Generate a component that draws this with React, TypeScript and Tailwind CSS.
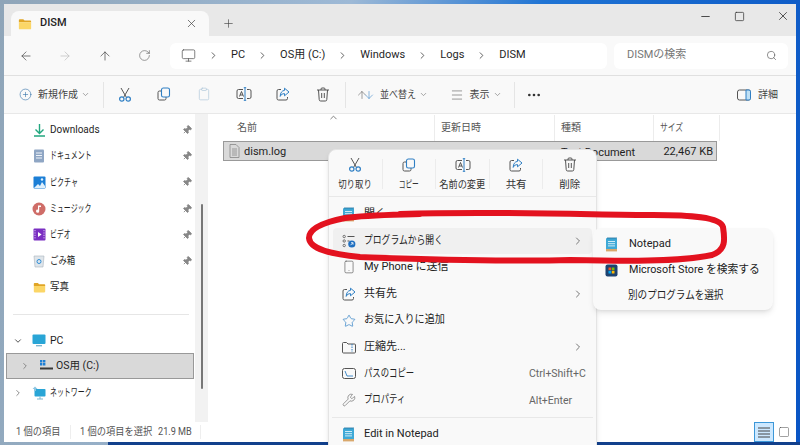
import { ArrowDown, ArrowLeft, ArrowRight, ArrowUp, ChevronDown, ChevronRight, ChevronUp, CirclePlus, Clipboard, Ellipsis, Menu, Minus, Monitor, Pin, Plus, RotateCw, Search, Square, Star, Smartphone, Wrench, X } from "lucide-react";
import type { ReactNode } from "react";

function FolderIcon({ size = 14 }: { size?: number }) {
  return (
    <svg width={size} height={size} viewBox="0 0 16 16">
      <path d="M1 3.5A1 1 0 0 1 2 2.5h4l1.5 1.5H14a1 1 0 0 1 1 1V6H1z" fill="#e0a526" />
      <path d="M1 6h14v7a1 1 0 0 1-1 1H2a1 1 0 0 1-1-1z" fill="#fbd667" />
    </svg>
  );
}

function ScissorsIcon() {
  return (
    <svg width="14" height="15" viewBox="0 0 14 15" fill="none">
      <path d="M3 1l5.2 9M11 1L5.8 10" stroke="#555" strokeWidth="1" />
      <circle cx="3.8" cy="12" r="2.2" stroke="#2f7fc4" strokeWidth="1.2" />
      <circle cx="10.2" cy="12" r="2.2" stroke="#2f7fc4" strokeWidth="1.2" />
    </svg>
  );
}

function CopyIcon() {
  return (
    <svg width="14" height="14" viewBox="0 0 14 14" fill="none">
      <path d="M4 4H2.5A1.5 1.5 0 0 0 1 5.5v6A1.5 1.5 0 0 0 2.5 13h5A1.5 1.5 0 0 0 9 11.5V10" stroke="#555" />
      <rect x="4.5" y="1" width="8" height="9" rx="1.8" stroke="#2f7fc4" strokeWidth="1.1" />
    </svg>
  );
}

function RenameIcon() {
  return (
    <svg width="16" height="14" viewBox="0 0 16 14" fill="none">
      <path d="M7 2.5H2.5A1.5 1.5 0 0 0 1 4v6a1.5 1.5 0 0 0 1.5 1.5H7M11 2.5h2.5A1.5 1.5 0 0 1 15 4v6a1.5 1.5 0 0 1-1.5 1.5H11" stroke="#555" />
      <path d="M3.5 9.5L5.5 4.5 7.5 9.5M4.2 8h2.6" stroke="#444" strokeWidth="0.9" />
      <path d="M9 .7v12.6M7.8.7h2.4M7.8 13.3h2.4" stroke="#2f7fc4" strokeWidth="1" />
    </svg>
  );
}

function ShareIcon() {
  return (
    <svg width="14" height="14" viewBox="0 0 14 14" fill="none">
      <path d="M5 2.5H2.5A1.5 1.5 0 0 0 1 4v7.5A1.5 1.5 0 0 0 2.5 13h7.5a1.5 1.5 0 0 0 1.5-1.5V10" stroke="#555" />
      <path d="M8.5 1.2L13 5 8.5 8.8V6.6C6.5 6.6 5 7.5 4.2 9.4 4.2 6 6 3.500 8.5 3.4z" stroke="#2f7fc4" strokeLinejoin="round" />
    </svg>
  );
}

function TrashIcon() {
  return (
    <svg width="14" height="15" viewBox="0 0 14 15" fill="none" stroke="#555">
      <path d="M1 3h12M5 3V2a1 1 0 0 1 1-1h2a1 1 0 0 1 1 1v1M2.5 3l.7 9.5A1.5 1.5 0 0 0 4.7 14h4.6a1.5 1.5 0 0 0 1.5-1.5L11.5 3" />
      <path d="M5.7 6v5M8.3 6v5" />
    </svg>
  );
}

function NotepadIcon() {
  return (
    <svg width="13" height="15" viewBox="0 0 13 15">
      <rect x="1" y="1" width="11" height="13" rx="1" fill="#3fa9d6" />
      <rect x="1" y="12" width="11" height="2.4" fill="#d9a86c" />
      <path d="M3 4.5h7M3 6.7h7M3 8.9h7" stroke="#dff3fb" strokeWidth="0.9" />
      <path d="M3 0v2.2M5 0v2.2M7 0v2.2M9 0v2.2M11 0v2.2" stroke="#1e6f9c" strokeWidth="0.8" />
    </svg>
  );
}

function StoreIcon() {
  return (
    <svg width="13" height="13" viewBox="0 0 13 13">
      <rect x="0.5" y="0.5" width="12" height="12" rx="2" fill="#1d4270" />
      <rect x="3.5" y="3.5" width="2.7" height="2.7" fill="#f25022" />
      <rect x="6.8" y="3.5" width="2.7" height="2.7" fill="#7fba00" />
      <rect x="3.5" y="6.8" width="2.7" height="2.7" fill="#00a4ef" />
      <rect x="6.8" y="6.8" width="2.7" height="2.7" fill="#ffb900" />
    </svg>
  );
}

function OpenWithIcon() {
  return (
    <svg width="14" height="14" viewBox="0 0 14 14" fill="none">
      <circle cx="2.2" cy="2.5" r="1.2" stroke="#555" strokeWidth="0.8" />
      <circle cx="2.2" cy="7" r="1.2" stroke="#555" strokeWidth="0.8" />
      <circle cx="2.2" cy="11.5" r="1.2" stroke="#555" strokeWidth="0.8" />
      <path d="M5.5 2.5h7M5.5 7h2" stroke="#555" />
      <circle cx="9.8" cy="10" r="3.6" fill="#1f6fc0" />
      <path d="M8.5 11.2l2.4-2.4M9 8.7h2v2" stroke="#fff" strokeWidth="0.8" />
    </svg>
  );
}

function DetailsIcon() {
  return (
    <svg width="14" height="12" viewBox="0 0 14 12" fill="none">
      <rect x="0.5" y="1" width="13" height="10" rx="2" stroke="#555" />
      <path d="M9 1h3a1.5 1.5 0 0 1 1.5 1.5v7A1.5 1.5 0 0 1 12 11H9z" fill="#bfe0f5" stroke="#2f7fc4" />
    </svg>
  );
}

function SideIcon({ name }: { name: string }) {
  if (name === "downloads")
    return (
      <svg width="13" height="14" viewBox="0 0 13 14" fill="none" stroke="#22a77f" strokeWidth="1.4">
        <path d="M6.5 1v9M2.5 6.5l4 4 4-4M1 13h11" />
      </svg>
    );
  if (name === "docs")
    return (
      <svg width="12" height="14" viewBox="0 0 12 14">
        <rect x="1" y="0.5" width="10" height="13" rx="1" fill="#8fa6c4" />
        <path d="M3 4h6M3 6.5h6M3 9h6" stroke="#eef3f9" />
      </svg>
    );
  if (name === "pictures")
    return (
      <svg width="13" height="13" viewBox="0 0 13 13">
        <rect x="0.5" y="0.5" width="12" height="12" rx="1" fill="#1c7fd6" />
        <path d="M1 12l4-4 2 2 2-4 3 4v2z" fill="#dff0fc" />
        <circle cx="9" cy="3.5" r="1.2" fill="#dff0fc" />
      </svg>
    );
  if (name === "music")
    return (
      <svg width="14" height="14" viewBox="0 0 14 14">
        <circle cx="7" cy="7" r="6.5" fill="#cf6d68" />
        <path d="M6 3.5h3v1.5H7.2v4.2a1.6 1.6 0 1 1-1.2-1.5z" fill="#fff" />
      </svg>
    );
  if (name === "video")
    return (
      <svg width="13" height="13" viewBox="0 0 13 13">
        <rect x="0.5" y="0.5" width="12" height="12" rx="1" fill="#7a2fc2" />
        <path d="M5 4l3.6 2.5L5 9z" fill="#fff" />
        <path d="M2 2v9M11 2v9" stroke="#d9c2f2" strokeDasharray="1.2 1.2" />
      </svg>
    );
  if (name === "trash")
    return (
      <svg width="12" height="14" viewBox="0 0 12 14">
        <path d="M1 2h10l-1 11H2z" fill="#dfe5ea" stroke="#a9b4bd" strokeWidth="0.6" />
        <circle cx="6" cy="7.5" r="2" fill="none" stroke="#2f8fd8" />
      </svg>
    );
  if (name === "pc")
    return (
      <svg width="14" height="13" viewBox="0 0 14 13">
        <rect x="0.5" y="0.5" width="13" height="9.5" rx="1" fill="#29a5d6" />
        <rect x="4" y="11" width="6" height="1.4" fill="#7fb7cf" />
      </svg>
    );
  if (name === "drive")
    return (
      <svg width="14" height="12" viewBox="0 0 14 12">
        <path d="M1 0h2.4v2.4H1zM4 0h2.4v2.4H4zM1 3h2.4v2.4H1zM4 3h2.4v2.4H4z" fill="#1c7fd6" />
        <rect x="1" y="7.5" width="13" height="2" fill="#3a3a3a" />
      </svg>
    );
  if (name === "network")
    return (
      <svg width="14" height="14" viewBox="0 0 14 14">
        <rect x="2.5" y="3" width="11" height="7.5" rx="0.8" fill="#29a5d6" />
        <path d="M8 10.5v2.5M5 13h6" stroke="#7fb7cf" />
        <path d="M0.5 3l2.5-2.5L5.500 3H4v2H2V3z" fill="#8cc5e2" />
      </svg>
    );
  return <FolderIcon size={13} />;
}

// the source UI font has very narrow kana, so the labels get squeezed sideways
const quickAccess = [
  { icon: "downloads", label: "Downloads", pin: true, squeeze: "scale-x-[0.95]" },
  { icon: "docs", label: "ドキュメント", pin: true, squeeze: "scale-x-[0.66]" },
  { icon: "pictures", label: "ピクチャ", pin: true, squeeze: "scale-x-[0.67]" },
  { icon: "music", label: "ミュージック", pin: true, squeeze: "scale-x-[0.66]" },
  { icon: "video", label: "ビデオ", pin: true, squeeze: "scale-x-[0.65]" },
  { icon: "trash", label: "ごみ箱", pin: true, squeeze: "scale-x-[0.8]" },
  { icon: "folder", label: "写真", pin: false, squeeze: "scale-x-[0.9]" },
];

function CmdButton({ children, dim }: { children: ReactNode; dim?: boolean }) {
  return <div className={`flex w-[39.6px] justify-center ${dim ? "opacity-40" : ""}`}>{children}</div>;
}

function MenuRow({ icon, label, right, arrow, active, squeeze = "" }: { icon?: ReactNode; label: string; right?: string; arrow?: boolean; active?: boolean; squeeze?: string }) {
  return (
    <div className={`mx-1 flex h-[26.6px] items-center rounded pr-[8px] ${active ? "bg-[#f0f0f0]" : ""}`}>
      <div className="flex w-[31px] justify-center">{icon}</div>
      <span className={`flex-1 origin-left whitespace-nowrap ${squeeze}`}>{label}</span>
      {right && <span className="w-[55px] whitespace-nowrap text-[10.5px] text-[#666]">{right}</span>}
      {arrow && <ChevronRight size={12} className="text-[#777]" />}
    </div>
  );
}

function QuickAction({ icon, label, squeeze = "" }: { icon: ReactNode; label: string; squeeze?: string }) {
  return (
    <div className="flex w-[53px] flex-col items-center gap-[5px]">
      <div className="flex h-[16px] items-center">{icon}</div>
      <span className={`whitespace-nowrap text-[10.5px] leading-[14px] text-[#333] ${squeeze}`}>{label}</span>
    </div>
  );
}

function ActionSep() {
  return <div className="h-[30px] w-px bg-[#ececec]" />;
}

export default function App() {
  return (
    <div className="relative h-[445px] w-[800px] overflow-hidden bg-[linear-gradient(100deg,#8fa5b8_0%,#9db9d6_40%,#1f74d4_62%,#0a55c4_100%)] pl-1 pt-1 font-['Roboto','Noto_Sans_CJK_JP',sans-serif] text-[11px] text-[#1f1f1f]">
      <div className="absolute bottom-0 left-[108px] right-0 h-[3px] bg-[#12408c]" />
      <div className="relative flex h-[438px] w-[792px] flex-col bg-white">
        {/* tab strip */}
        <div className="flex h-[32px] items-end bg-[#e8e8e8] pl-[7px]">
          <div className="flex h-[25px] w-[198px] items-center rounded-t-lg bg-[#f9f9f9] pl-[7px] pr-[11px]">
            <FolderIcon />
            <span className="ml-[8px] flex-1 text-[11px] font-medium">DISM</span>
            <X size={13} strokeWidth={1.3} className="text-[#444]" />
          </div>
          <div className="flex h-[25px] w-[36px] items-center justify-center pl-[1px]">
            <Plus size={13} strokeWidth={1.2} className="ml-[1px] text-[#444]" />
          </div>
          <div className="flex h-[32px] flex-1 items-center justify-end pb-[8px] text-[#333]">
            <Minus size={13} strokeWidth={1.6} className="mr-[22px]" />
            <Square size={11} strokeWidth={1.6} className="mr-[31px]" />
            <X size={14} strokeWidth={1.4} className="mr-[6px]" />
          </div>
        </div>

        {/* address row */}
        <div className="flex h-[40px] items-center border-b border-[#e0e0e0] bg-[#f9f9f9] pl-[2px]">
          <div className="flex w-[39.5px] justify-center"><ArrowLeft size={14} strokeWidth={1.2} className="text-[#444]" /></div>
          <div className="flex w-[39.5px] justify-center"><ArrowRight size={14} strokeWidth={1.2} className="text-[#bbb]" /></div>
          <div className="flex w-[39.5px] justify-center"><ArrowUp size={14} strokeWidth={1.2} className="text-[#444]" /></div>
          <div className="flex w-[39.5px] justify-center"><RotateCw size={13} strokeWidth={1.2} className="text-[#666]" /></div>
          <div className="ml-[6px] flex h-[26px] w-[437px] items-center gap-[12px] rounded-md bg-white pl-[11px] text-[11px]">
            <Monitor size={15} strokeWidth={1.2} className="text-[#555]" />
            <ChevronRight size={11} className="text-[#555]" />
            <span>PC</span>
            <ChevronRight size={11} className="text-[#555]" />
            <span>OS用 (C:)</span>
            <ChevronRight size={11} className="text-[#555]" />
            <span>Windows</span>
            <ChevronRight size={11} className="text-[#555]" />
            <span>Logs</span>
            <ChevronRight size={11} className="text-[#555]" />
            <span>DISM</span>
          </div>
          <div className="ml-[7px] flex h-[26px] w-[174px] items-center justify-between rounded-md bg-white pl-[13px] pr-[11px] text-[11px] text-[#777]">
            <span>DISMの検索</span>
            <Search size={11} strokeWidth={1.4} className="text-[#555]" />
          </div>
        </div>

        {/* command bar */}
        <div className="flex h-[38px] items-center border-b border-[#e8e8e8] bg-[#f9f9f9] text-[#444]">
          <div className="flex w-[99px] items-center pl-[15px]">
            <CirclePlus size={13} strokeWidth={1.1} className="text-[#2f6fa8]" />
            <span className="ml-[6px] text-[10px]">新規作成</span>
            <ChevronDown size={9} className="ml-[3px] text-[#888]" />
          </div>
          <div className="h-[26px] w-px bg-[#e5e5e5]" />
          <div className="ml-px flex">
            <CmdButton><ScissorsIcon /></CmdButton>
            <CmdButton><CopyIcon /></CmdButton>
            <CmdButton dim><Clipboard size={14} strokeWidth={1.1} className="text-[#3a7aaa]" /></CmdButton>
            <CmdButton><RenameIcon /></CmdButton>
            <CmdButton><ShareIcon /></CmdButton>
            <CmdButton><TrashIcon /></CmdButton>
          </div>
          <div className="ml-[2px] h-[26px] w-px bg-[#e5e5e5]" />
          <div className="ml-[10px] flex items-center">
            <div className="flex">
              <ArrowUp size={12} strokeWidth={1.1} className="-mr-[5px] text-[#555]" />
              <ArrowDown size={12} strokeWidth={1.1} className="text-[#2f7fc4]" />
            </div>
            <span className="ml-[5px] inline-block w-[36px] origin-left scale-x-[0.9] whitespace-nowrap text-[10px]">並べ替え</span>
            <ChevronDown size={9} className="ml-[3px] text-[#888]" />
          </div>
          <Menu size={14} strokeWidth={1} className="ml-[22px] text-[#555]" />
          <span className="ml-[6px] text-[10px]">表示</span>
          <ChevronDown size={9} className="ml-[3px] text-[#888]" />
          <div className="ml-[12px] h-[26px] w-px bg-[#e5e5e5]" />
          <Ellipsis size={16} className="ml-[11px] text-[#333]" />
          <div className="ml-auto flex items-center pr-[18px]">
            <DetailsIcon />
            <span className="ml-[7px] text-[10px]">詳細</span>
          </div>
        </div>

        {/* body */}
        <div className="flex flex-1 bg-white">
          <div className="flex w-[191px] flex-col pt-[3px]">
            {quickAccess.map((it) => (
              <div key={it.label} className="flex h-[26.2px] items-center pl-[28px] pr-[3px]">
                <div className="flex w-[14px] justify-center"><SideIcon name={it.icon} /></div>
                <span className={`ml-[4px] flex-1 origin-left whitespace-nowrap text-[10.5px] ${it.squeeze}`}>{it.label}</span>
                {it.pin && <Pin size={10} className="rotate-45 fill-[#888] text-[#888]" />}
              </div>
            ))}
            <div className="ml-[9px] mr-[6px] mt-[14px] h-px bg-[#e6e6e6]" />
            <div className="mt-[13px] flex h-[25px] items-center pl-[9px]">
              <ChevronDown size={10} className="text-[#333]" />
              <div className="ml-[9px] flex w-[14px] justify-center"><SideIcon name="pc" /></div>
              <span className="ml-[4px] text-[10.5px]">PC</span>
            </div>
            <div className="ml-[2px] flex h-[26px] w-[188px] items-center border border-[#999] bg-[#d9d9d9] pl-[13px]">
              <ChevronRight size={10} className="text-[#777]" />
              <div className="ml-[9px] flex w-[14px] justify-center"><SideIcon name="drive" /></div>
              <span className="ml-[3px] text-[10.5px]">OS用 (C:)</span>
            </div>
            <div className="flex h-[27px] items-center pl-[9px]">
              <ChevronRight size={10} className="text-[#777]" />
              <div className="ml-[9px] flex w-[14px] justify-center"><SideIcon name="network" /></div>
              <span className="ml-[4px] origin-left scale-x-[0.66] whitespace-nowrap text-[10.5px]">ネットワーク</span>
            </div>
          </div>
          <div className="w-[13px] bg-[#f2f2f2] pl-[6px] pt-[90px]">
            <div className="h-[185px] w-[2px] rounded-full bg-[#777]" />
          </div>

          {/* file list */}
          <div className="flex flex-1 flex-col pl-[15px]">
            <div className="flex h-[27px] items-center text-[10px] text-[#555]">
              <div className="relative h-[26px] w-[212px] border-r border-[#ececec] pl-[14px] leading-[26px]">
                名前
                <ChevronUp size={11} className="absolute left-[105px] top-[-3px] text-[#777]" />
              </div>
              <div className="h-[26px] w-[120px] border-r border-[#ececec] pl-[6px] leading-[26px]">更新日時</div>
              <div className="h-[26px] w-[99px] border-r border-[#ececec] pl-[6px] leading-[26px]">種類</div>
              <div className="h-[26px] w-[66px] border-r border-[#ececec] pl-[6px]">
                <span className="inline-block origin-left scale-x-[0.78] leading-[26px]">サイズ</span>
              </div>
            </div>
            <div className="flex h-[20px] w-[494px] items-center border border-[#999] bg-[#d9d9d9] pl-[5px] pr-[3px] text-[11px]">
              <svg width="11" height="14" viewBox="0 0 11 14" fill="none" stroke="#888" strokeWidth="0.8">
                <path d="M1 .5h6l3 3v10H1zM3 5h5M3 7h5M3 9h5M3 11h5" />
              </svg>
              <span className="ml-[4px] w-[317px] pt-[2px]">dism.log</span>
              <span className="pt-[5px]">Text Document</span>
              <span className="ml-auto pt-[2px]">22,467 KB</span>
            </div>
          </div>
        </div>

        {/* status bar */}
        <div className="flex h-[20px] items-center bg-white pl-[12px] text-[10.5px] text-[#555]">
          <span className="inline-block w-[54px] origin-left scale-x-[0.88] whitespace-nowrap">1 個の項目</span>
          <div className="h-[14px] w-px bg-[#eee]" />
          <span className="ml-[9px] inline-block w-[78px] origin-left scale-x-[0.88] whitespace-nowrap">1 個の項目を選択</span>
          <span className="inline-block w-[42px] origin-left scale-x-[0.87] whitespace-nowrap">21.9 MB</span>
          <div className="h-[14px] w-px bg-[#eee]" />
          <div className="ml-auto flex items-center pr-[6px]">
            <div className="flex h-[20px] w-[20px] items-center justify-center border border-[#3c97d8] bg-[#cce8ff]">
              <svg width="12" height="11" viewBox="0 0 12 11" stroke="#444">
                <path d="M0 1h12M0 4h12M0 7h12M0 10h12" />
              </svg>
            </div>
            <Square size={12} strokeWidth={1} className="ml-[4px] text-[#444]" />
          </div>
        </div>
      </div>

      {/* context menu */}
      <div className="absolute left-[328px] top-[149px] h-[310px] w-[269px] rounded-lg border border-[#e4e4e4] bg-[#f9f9f9] text-[11px] text-[#222] shadow-md">
        <div className="flex h-[47px] items-center border-b border-[#e8e8e8] pt-[2px]">
          <QuickAction icon={<ScissorsIcon />} label="切り取り" squeeze="scale-x-[0.8]" />
          <ActionSep />
          <QuickAction icon={<CopyIcon />} label="コピー" squeeze="scale-x-[0.64]" />
          <ActionSep />
          <QuickAction icon={<RenameIcon />} label="名前の変更" squeeze="scale-x-[0.88]" />
          <ActionSep />
          <QuickAction icon={<ShareIcon />} label="共有" />
          <ActionSep />
          <QuickAction icon={<TrashIcon />} label="削除" />
        </div>
        <div className="pt-[4px]">
          <MenuRow icon={<NotepadIcon />} label="開く" />
          <MenuRow icon={<OpenWithIcon />} label="プログラムから開く" arrow active squeeze="scale-x-[0.8]" />
          <MenuRow icon={<Smartphone size={14} strokeWidth={1.1} className="text-[#555]" />} label="My Phone に送信" />
          <MenuRow icon={<ShareIcon />} label="共有先" arrow />
          <MenuRow icon={<Star size={14} strokeWidth={1.2} className="text-[#2f7fc4]" />} label="お気に入りに追加" squeeze="scale-x-[0.92]" />
          <MenuRow
            icon={
              <svg width="14" height="13" viewBox="0 0 14 13" fill="none">
                <path d="M.5 2.5a1 1 0 0 1 1-1h3l1.500 1.500h6.500a1 1 0 0 1 1 1v7a1 1 0 0 1-1 1h-11a1 1 0 0 1-1-1z" stroke="#555" />
                <path d="M10 3v8" stroke="#2f7fc4" strokeDasharray="1.500 1" />
              </svg>
            }
            label="圧縮先..."
            arrow
          />
          <MenuRow
            icon={
              <svg width="14" height="11" viewBox="0 0 14 11" fill="none">
                <rect x=".5" y=".5" width="13" height="10" rx="2" stroke="#555" />
                <path d="M3 3l2 5h6" stroke="#2f7fc4" strokeWidth=".9" />
              </svg>
            }
            label="パスのコピー"
            right="Ctrl+Shift+C"
            squeeze="scale-x-[0.76]"
          />
          <MenuRow icon={<Wrench size={14} strokeWidth={1} className="text-[#555]" />} label="プロパティ" right="Alt+Enter" squeeze="scale-x-[0.76]" />
          <div className="mx-[3px] my-[3px] h-px bg-[#e8e8e8]" />
          <MenuRow icon={<NotepadIcon />} label="Edit in Notepad" />
        </div>
      </div>

      {/* submenu */}
      <div className="absolute left-[593px] top-[228px] flex h-[82px] w-[180px] flex-col justify-center rounded-lg bg-[#f9f9f9] pt-[2px] text-[11px] text-[#222] shadow-md">
        <div className="flex h-[26px] items-center pl-[12px]"><NotepadIcon /><span className="ml-[11px]">Notepad</span></div>
        <div className="flex h-[26px] items-center pl-[12px]"><StoreIcon /><span className="ml-[11px] origin-left scale-x-[0.98] whitespace-nowrap">Microsoft Store を検索する</span></div>
        <div className="flex h-[26px] items-center pl-[35px]">
          <span className="origin-left scale-x-[0.87] whitespace-nowrap">別のプログラムを選択</span>
        </div>
      </div>

      {/* red marker */}
      <svg className="pointer-events-none absolute left-0 top-0" width="800" height="445" fill="none">
        <path d="M400 214C500 211 600 215 653 215C690 215 720 217 723 227C725 240 726 250 712 255C680 262 620 261 570 260C500 262 420 259 360 257C330 254 310 249 309 238C309 228 325 222 345 218C365 215 385 215 420 214" stroke="#e3121f" strokeWidth="6" strokeLinecap="round" />
      </svg>
    </div>
  );
}
